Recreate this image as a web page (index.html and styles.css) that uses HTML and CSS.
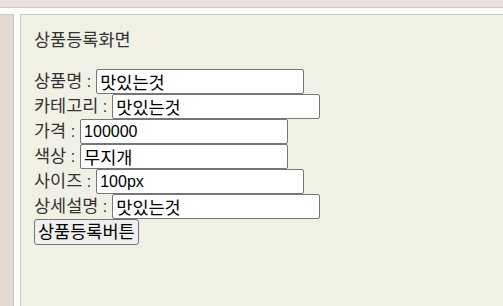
FILE: index.html
```html
<!DOCTYPE html>
<html lang="ko">
<head>
<meta charset="utf-8">
<title>상품등록화면</title>
<link rel="stylesheet" href="styles.css">
</head>
<body>
<div class="topbar"></div>
<div class="layout">
  <aside class="side"></aside>
  <main class="main">
    <div class="title"><span class="ko">상품등록화면</span></div>
    <form class="form">
      <div class="row"><span class="label"><span class="ko">상품명</span> :</span><input class="field ko-field" type="text" value="맛있는것"></div>
      <div class="row"><span class="label"><span class="ko">카테고리</span> :</span><input class="field ko-field" type="text" value="맛있는것"></div>
      <div class="row"><span class="label"><span class="ko">가격</span> :</span><input class="field" type="text" value="100000"></div>
      <div class="row"><span class="label"><span class="ko">색상</span> :</span><input class="field ko-field" type="text" value="무지개"></div>
      <div class="row"><span class="label"><span class="ko">사이즈</span> :</span><input class="field" type="text" value="100px"></div>
      <div class="row"><span class="label"><span class="ko">상세설명</span> :</span><input class="field ko-field" type="text" value="맛있는것"></div>
      <div class="row"><button class="btn" type="button">상품등록버튼</button></div>
    </form>
  </main>
</div>
</body>
</html>
```
FILE: styles.css
```css
html, body {
  margin: 0;
  padding: 0;
  height: 100%;
  background: #ffffff;
  font-family: "Liberation Sans", "Noto Sans CJK KR", sans-serif;
  font-size: 16px;
  overflow: hidden;
}
body {
  display: flex;
  flex-direction: column;
}
.topbar {
  height: 7px;
  background: #e9e1dd;
  border-bottom: 1px solid #cfcaca;
  flex: none;
}
.layout {
  flex: 1;
  display: flex;
  gap: 6px;
  margin-top: 6px;
}
.side {
  width: 13px;
  background: #e5d9d5;
  border-top: 1px solid #c9c9c9;
  border-right: 1px solid #c9c9c9;
  flex: none;
}
.main {
  flex: 1;
  background: #f1f0e5;
  border-top: 1px solid #c9c9c9;
  border-left: 1px solid #c9c9c9;
  padding: 13px 0 0 13px;
  color: #333333;
}
.ko {
  font-size: 17.5px;
}
.title {
  height: 25px;
  line-height: 25px;
  margin-bottom: 16px;
}
.form {
  display: flex;
  flex-direction: column;
}
.row {
  display: flex;
  align-items: center;
  height: 25px;
}
.label {
  white-space: pre;
  margin-right: 5px;
  line-height: 25px;
}
.field {
  box-sizing: border-box;
  width: 208px;
  height: 25px;
  margin: 0;
  padding: 1px 2px 1px 3px;
  border: 1px solid #767676;
  border-radius: 2px;
  background: #ffffff;
  color: #000000;
  font-family: "Liberation Sans", "Noto Sans CJK KR", sans-serif;
  font-size: 16px;
}
.ko-field {
  font-size: 17.5px;
}
.btn {
  box-sizing: border-box;
  height: 26px;
  margin-top: 1px;
  padding: 0 3px;
  border: 1px solid #767676;
  border-radius: 3px;
  background: #efefef;
  color: #000000;
  font-family: "Liberation Sans", "Noto Sans CJK KR", sans-serif;
  font-size: 17.5px;
  line-height: 20px;
}
```
